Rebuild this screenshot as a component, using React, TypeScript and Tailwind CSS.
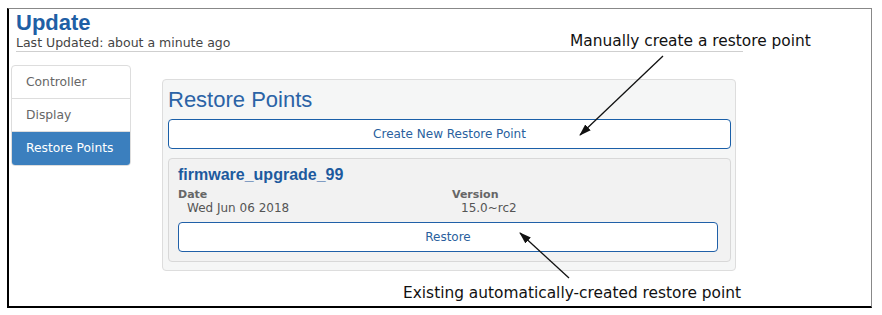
import React from 'react';

const NAV = ['Controller', 'Display', 'Restore Points'];

const font = { fontFamily: '"DejaVu Sans", "Liberation Sans", sans-serif' };
const arial = { fontFamily: '"Liberation Sans", Arial, sans-serif' };

const Arrows: React.FC = () => (
  <svg className="absolute left-0 top-0 pointer-events-none" width="882" height="315">
    <defs>
      <marker id="head" markerWidth="12" markerHeight="8" refX="11" refY="4" orient="auto" markerUnits="userSpaceOnUse">
        <path d="M0,0 L12,4 L0,8 Z" fill="#111" />
      </marker>
    </defs>
    <line x1="663" y1="56" x2="580" y2="135" stroke="#111" strokeWidth="1.3" markerEnd="url(#head)" />
    <line x1="569" y1="278" x2="520" y2="233" stroke="#111" strokeWidth="1.3" markerEnd="url(#head)" />
  </svg>
);

export default function App() {
  return (
    <div className="relative w-[882px] h-[315px] bg-white overflow-hidden" style={font}>
      <div className="absolute left-[7px] top-[8px] w-[865px] h-[300px] border-t border-r border-t-[#888] border-r-[#888] border-l-2 border-b-2 border-l-black border-b-black">
        <div className="ml-[7px] w-[727px] border-b border-[#cfcfcf] pt-[2px]">
          <h1 className="text-[22px] leading-[24px] font-bold text-[#1f5fa5]" style={arial}>Update</h1>
          <p className="text-[12.5px] leading-[16px] text-[#444]">Last Updated: about a minute ago</p>
        </div>

        <div className="flex items-start mt-[13px] ml-[2px]">
          <div className="w-[120px] rounded-[4px] border border-[#ddd] overflow-hidden bg-white">
            {NAV.map((n, i) => (
              <div
                key={n}
                className={
                  i === 2
                    ? 'h-[33px] pl-[14px] flex items-center text-[12.3px] text-white bg-[#3b7fbe]'
                    : 'h-[33px] pl-[14px] flex items-center text-[12.3px] text-[#666] border-b border-[#ddd]'
                }
              >
                {n}
              </div>
            ))}
          </div>

          <div className="ml-[31px] mt-[14px] w-[574px] h-[192px] rounded-[4px] border border-[#ddd] bg-[#f5f6f6] px-[5px] pt-[6px]">
            <h2 className="text-[22px] leading-[28px] text-[#2b63a6]" style={arial}>Restore Points</h2>
            <button className="mt-[5px] w-[563px] h-[30px] rounded-[4px] border-[1.5px] border-[#1a5fa8] bg-white text-[12px] text-[#2a5f9e]">
              Create New Restore Point
            </button>
            <div className="mt-[9px] w-[563px] h-[104px] rounded-[4px] border border-[#d8d8d8] bg-[#f2f2f2] px-[9px] pt-[6px]">
              <div className="text-[16px] leading-[20px] font-bold text-[#1d5a9e]" style={arial}>firmware_upgrade_99</div>
              <div className="flex mt-[3px]">
                <div className="w-[274px]">
                  <div className="text-[11px] leading-[13px] font-bold text-[#666]">Date</div>
                  <div className="pl-[9px] text-[12px] leading-[14px] text-[#555]">Wed Jun 06 2018</div>
                </div>
                <div>
                  <div className="text-[11px] leading-[13px] font-bold text-[#666]">Version</div>
                  <div className="pl-[9px] text-[12px] leading-[14px] text-[#555]">15.0~rc2</div>
                </div>
              </div>
              <button className="mt-[7px] w-[540px] h-[30px] rounded-[4px] border border-[#2060a8] bg-white text-[12px] text-[#2a5f9e]">
                Restore
              </button>
            </div>
          </div>
        </div>
      </div>

      <div className="absolute left-[570px] top-[31px] text-[15.4px] leading-[20px] text-[#111]">
        Manually create a restore point
      </div>
      <div className="absolute left-[403px] top-[283px] text-[15.4px] leading-[20px] text-[#111]">
        Existing automatically-created restore point
      </div>
      <Arrows />
    </div>
  );
}
